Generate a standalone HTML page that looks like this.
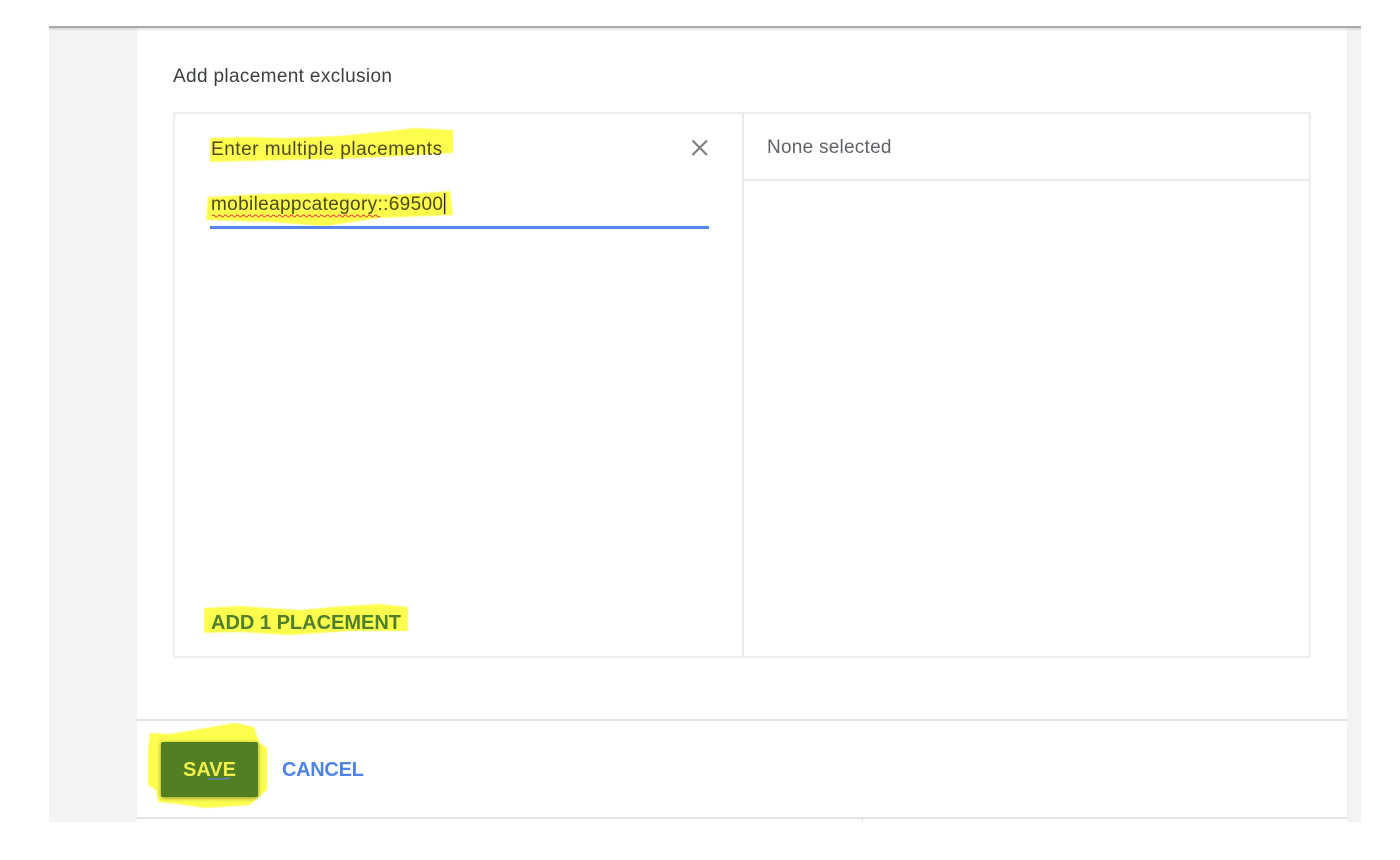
<!DOCTYPE html>
<html lang="en">
<head>
<meta charset="utf-8">
<title>Add placement exclusion</title>
<style>
html,body{margin:0;padding:0;width:1400px;height:860px;overflow:hidden;background:#fff;}
body{position:relative;font-family:"Liberation Sans",Arial,sans-serif;}
.a{position:absolute;box-sizing:border-box;}
.t{position:absolute;white-space:nowrap;line-height:20px;filter:blur(.35px);}
</style>
</head>
<body>
<div class="a" style="left:49px;top:26px;width:1312px;height:796px;background:#f1f3f5;"></div>
<div class="a" style="left:137px;top:28px;width:1210px;height:794px;background:#fff;"></div>
<div class="a" style="left:49px;top:26px;width:1312px;height:2px;background:#a9a9a9;"></div>
<div class="a" style="left:49px;top:28px;width:1312px;height:3px;background:linear-gradient(#00000022,#00000000);"></div>

<div class="t" style="left:173px;top:67px;font-size:19px;color:#3c4043;letter-spacing:.35px;">Add placement exclusion</div>

<div class="a" style="left:173px;top:112px;width:1138px;height:546px;border:2px solid #eeeeef;"></div>
<div class="a" style="left:742px;top:113px;width:2px;height:545px;background:#e9eaeb;"></div>
<div class="a" style="left:743px;top:179px;width:567px;height:2px;background:#eaebec;"></div>
<div class="a" style="left:137px;top:719px;width:1210px;height:2px;background:#e2e4e7;"></div>
<div class="a" style="left:137px;top:817px;width:1210px;height:2px;background:#e0e2e4;"></div>
<div class="a" style="left:862px;top:819px;width:1px;height:3px;background:#d8dadc;"></div>

<svg class="a" style="left:0;top:0;" width="1400" height="860" viewBox="0 0 1400 860">
  <g style="filter:blur(.5px)">
  <path fill="#fdfd4e" d="M210 138 L248 137 L285 138 L340 136 L380 132 L415 128 L453 130 L453 153 L400 156 L340 159 L285 160 L245 161 L210 162 Z"/>
  <path fill="#fdfd4e" d="M208 197 L260 194 L340 193 L395 195 L450 191 L453 215 L380 218 L325 226 L270 222 L206 220 Z"/>
  <path fill="#fdfd4e" d="M204 608 L240 606 L300 610 L345 606 L380 604 L408 607 L408 631 L350 631 L290 635 L240 632 L204 633 Z"/>
  <path fill="#fdfd4e" d="M150 733 L170 734 L200 729 L235 723 L254 727 L259 742 L267 748 L267 790 L250 805 L205 808 L178 804 L158 802 L156 790 L148 785 L148 750 Z"/>
  </g>
  <rect x="161" y="742" width="97" height="55" rx="2" fill="#527f23" style="filter:drop-shadow(0 1px 2px rgba(0,0,0,.45))"/>
  <path fill="none" stroke="#5b7fd0" stroke-width="1.200" d="M208 779 H224 L230 778"/>
  <path fill="none" stroke="#dc3c3c" stroke-width="1" d="M212 216 q1.500 -2 3 0 t3 0 t3 0 t3 0 t3 0 t3 0 t3 0 t3 0 t3 0 t3 0 t3 0 t3 0 t3 0 t3 0 t3 0 t3 0 t3 0 t3 0 t3 0 t3 0 t3 0 t3 0 t3 0 t3 0 t3 0 t3 0 t3 0 t3 0 t3 0 t3 0 t3 0 t3 0 t3 0 t3 0 t3 0 t3 0 t3 0 t3 0 t3 0 t3 0 t3 0 t3 0 t3 0 t3 0 t3 0 t3 0 t3 0 t3 0 t3 0 t3 0 t3 0 t3 0 t3 0 t3 0 t3 0 t3 0"/>
  <rect x="210" y="226" width="499" height="3" fill="#5485e8"/>
  <path fill="none" stroke="#808080" stroke-width="2.200" d="M692.500 140.500 L707 155 M707 140.500 L692.500 155"/>
  <rect x="444" y="193" width="1.300" height="21" fill="#222"/>
</svg>

<div class="t" style="left:211px;top:140px;font-size:19px;color:#4d4a18;letter-spacing:.52px;">Enter multiple placements</div>
<div class="t" style="left:211px;top:195px;font-size:19px;color:#4d4a18;letter-spacing:.35px;">mobileappcategory::69500</div>
<div class="t" style="left:767px;top:138px;font-size:19px;color:#5f6368;letter-spacing:.25px;">None selected</div>
<div class="t" style="left:211px;top:613px;font-size:20px;font-weight:bold;color:#4f7f2a;">ADD 1 PLACEMENT</div>
<div class="t" style="left:183px;top:760px;font-size:20px;font-weight:bold;color:#eef04e;">SAVE</div>
<div class="t" style="left:282px;top:760px;font-size:20px;font-weight:bold;color:#4f83e6;letter-spacing:-.3px;">CANCEL</div>
</body>
</html>
